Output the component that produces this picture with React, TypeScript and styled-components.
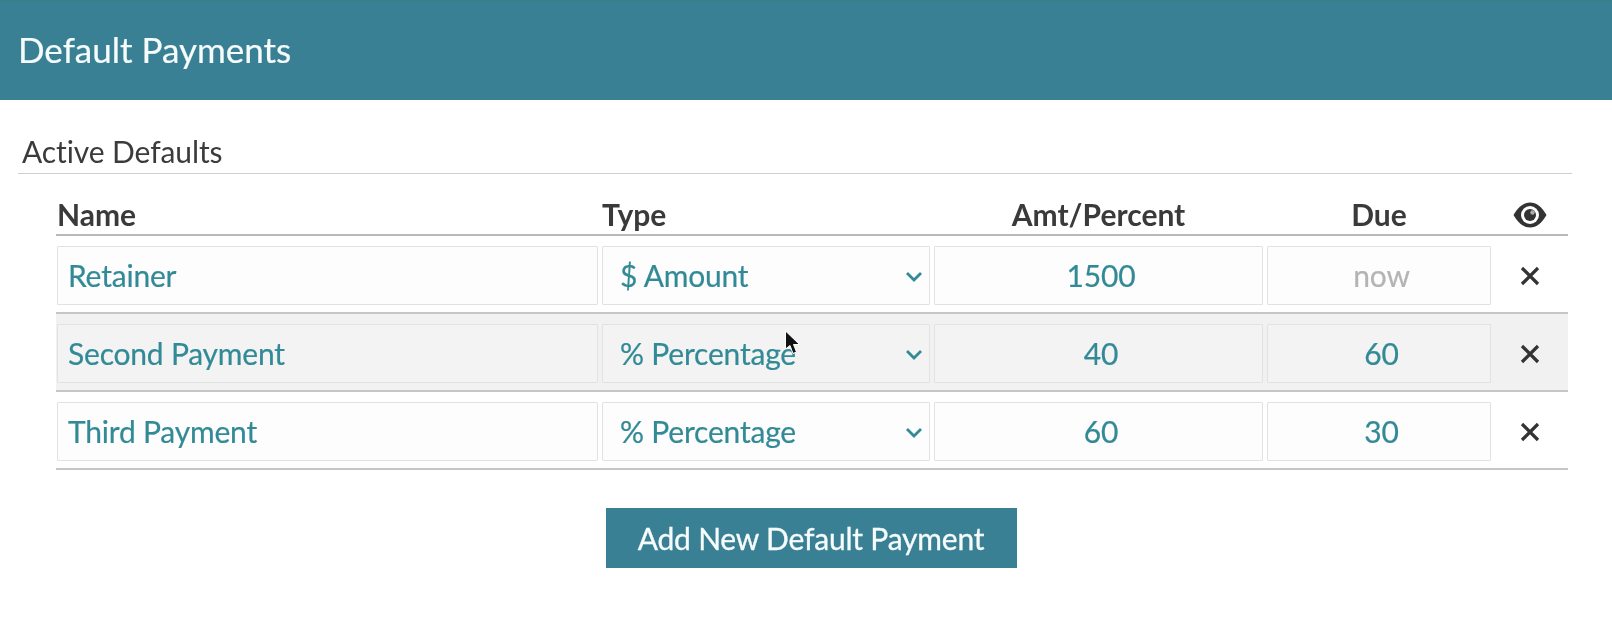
import React from "react";
import styled, { createGlobalStyle } from "styled-components";

const Global = createGlobalStyle`
  html, body { margin: 0; padding: 0; background: #fff; }
  body { font-family: Lato, "Open Sans", "Liberation Sans", sans-serif; }
`;

const Page = styled.div`
  position: relative;
  width: 1612px;
  height: 620px;
  overflow: hidden;
  background: #fff;
  filter: blur(0.4px);
`;

const TitleBar = styled.header`
  height: 100px;
  box-sizing: border-box;
  padding: 0 0 2px 18px;
  display: flex;
  align-items: center;
  background: #398095;
  box-shadow: inset 0 1px 0 #3d7f80;
`;

const Title = styled.h1`
  margin: 0;
  font-size: 35px;
  font-weight: 400;
  color: #f6fbfc;
  -webkit-text-stroke: 0.2px #f6fbfc;
`;

const Section = styled.section`
  padding: 0 40px 0 18px;
`;

const SectionHeading = styled.h2`
  margin: 0;
  height: 74px;
  box-sizing: border-box;
  padding: 32px 0 0 4px;
  font-size: 30px;
  line-height: 38px;
  font-weight: 400;
  letter-spacing: -0.1px;
  color: #3b3b3b;
  border-bottom: 1px solid #cfcfcf;
`;

const Table = styled.div`
  margin-left: 38px;
  width: 1512px;
  display: flex;
  flex-direction: column;
`;

const gridColumns = `
  display: grid;
  grid-template-columns: 541px 328px 329px 224px 1fr;
  column-gap: 4px;
  padding-left: 1px;
  box-sizing: border-box;
`;

const HeadRow = styled.div`
  ${gridColumns}
  height: 62px;
  align-items: end;
  padding-bottom: 1px;
  border-bottom: 2px solid #b9b9b9;
`;

const HeadCell = styled.div<{ $center?: boolean }>`
  font-size: 30px;
  line-height: 38px;
  font-weight: 700;
  color: #3a3a3a;
  text-align: ${(p) => (p.$center ? "center" : "left")};
`;

const EyeCell = styled.div`
  display: flex;
  justify-content: center;
  padding-right: 4px;
  padding-bottom: 5px;
  color: #333;
`;

const Row = styled.div<{ $shaded?: boolean }>`
  ${gridColumns}
  height: 78px;
  padding-top: 10px;
  border-bottom: 2px solid #c6c6c6;
  background: ${(p) => (p.$shaded ? "#f1f1f1" : "#fff")};
`;

const fieldBase = `
  height: 59px;
  width: 100%;
  box-sizing: border-box;
  border: 1px solid #e2e2e2;
  border-radius: 1px;
  outline: none;
  font-family: Lato, "Open Sans", "Liberation Sans", sans-serif;
  font-size: 30px;
  letter-spacing: -0.2px;
  color: #328a96;
  -webkit-text-stroke: 0.2px #328a96;
`;

const TextField = styled.input<{ $shaded?: boolean; $center?: boolean }>`
  ${fieldBase}
  padding: ${(p) => (p.$center ? "0 0 2px 5px" : "0 10px 2px")};
  text-align: ${(p) => (p.$center ? "center" : "left")};
  background: ${(p) => (p.$shaded ? "#f3f3f3" : "#fdfdfd")};
  &::placeholder {
    color: #b4b4b4;
    opacity: 1;
    -webkit-text-stroke: 0.2px #b4b4b4;
  }
`;

const SelectWrap = styled.div`
  position: relative;
  height: 59px;
`;

const SelectField = styled.select<{ $shaded?: boolean }>`
  ${fieldBase}
  appearance: none;
  padding: 0 40px 2px 17px;
  background: ${(p) => (p.$shaded ? "#f3f3f3" : "#fdfdfd")};
`;

const Chevron = styled.svg`
  position: absolute;
  right: 7px;
  top: 25px;
  width: 18px;
  height: 11px;
  pointer-events: none;
`;

const RemoveCell = styled.button`
  height: 59px;
  padding: 0 4px 0 0;
  border: 0;
  background: none;
  display: flex;
  align-items: center;
  justify-content: center;
  color: #333;
`;

const Actions = styled.div`
  display: flex;
  justify-content: center;
  padding: 38px 2px 0 0;
`;

const AddButton = styled.button`
  width: 411px;
  height: 60px;
  border: 0;
  padding: 0;
  background: #398095;
  color: #f6fbfc;
  font-family: Lato, "Open Sans", "Liberation Sans", sans-serif;
  font-size: 30px;
  font-weight: 400;
  letter-spacing: -0.2px;
  -webkit-text-stroke: 0.3px #f6fbfc;
`;

const Cursor = styled.svg`
  position: absolute;
  left: 784px;
  top: 330px;
  width: 17px;
  height: 25px;
`;

type Payment = { name: string; type: string; amount: string; due: string; placeholder?: string };

const payments: Payment[] = [
  { name: "Retainer", type: "$ Amount", amount: "1500", due: "", placeholder: "now" },
  { name: "Second Payment", type: "% Percentage", amount: "40", due: "60" },
  { name: "Third Payment", type: "% Percentage", amount: "60", due: "30" },
];

const EyeIcon = () => (
  <svg width="34" height="26" viewBox="0 0 34 26" aria-hidden="true">
    <path d="M0.500 13C5 5 10.500 0.500 17 0.500S29 5 33.500 13C29 21 23.500 25.500 17 25.500S5 21 0.500 13Z" fill="currentColor" />
    <circle cx="17" cy="13" r="9" fill="#fff" />
    <circle cx="17" cy="13" r="6" fill="currentColor" />
    <circle cx="19.500" cy="10.500" r="2.200" fill="#fff" opacity=".6" />
  </svg>
);

const CloseIcon = () => (
  <svg width="22" height="22" viewBox="0 0 22 22" aria-hidden="true">
    <path d="M3 3L19 19M19 3L3 19" fill="none" stroke="currentColor" strokeWidth="3.200" />
  </svg>
);

export default function App() {
  return (
    <Page>
      <Global />
      <TitleBar>
        <Title>Default Payments</Title>
      </TitleBar>
      <Section>
        <SectionHeading>Active Defaults</SectionHeading>
        <Table>
          <HeadRow>
            <HeadCell>Name</HeadCell>
            <HeadCell>Type</HeadCell>
            <HeadCell $center>Amt/Percent</HeadCell>
            <HeadCell $center>Due</HeadCell>
            <EyeCell>
              <EyeIcon />
            </EyeCell>
          </HeadRow>
          {payments.map((p, i) => {
            const shaded = i === 1;
            return (
              <Row key={p.name} $shaded={shaded}>
                <TextField $shaded={shaded} defaultValue={p.name} />
                <SelectWrap>
                  <SelectField $shaded={shaded} defaultValue={p.type}>
                    <option>$ Amount</option>
                    <option>% Percentage</option>
                  </SelectField>
                  <Chevron viewBox="0 0 18 11" aria-hidden="true">
                    <path d="M2 2L9 9L16 2" fill="none" stroke="#328a96" strokeWidth="2.800" />
                  </Chevron>
                </SelectWrap>
                <TextField $shaded={shaded} $center defaultValue={p.amount} />
                <TextField $shaded={shaded} $center defaultValue={p.due} placeholder={p.placeholder} />
                <RemoveCell aria-label="Remove">
                  <CloseIcon />
                </RemoveCell>
              </Row>
            );
          })}
          <Actions>
            <AddButton>Add New Default Payment</AddButton>
          </Actions>
        </Table>
      </Section>
      <Cursor viewBox="0 0 17 25" aria-hidden="true">
        <path d="M1.500 1L1.500 19L6 15.500L9 23.500L12.500 22L9.500 14.500L15.500 14.500Z" fill="#111" stroke="#fff" strokeWidth="1" />
      </Cursor>
    </Page>
  );
}
